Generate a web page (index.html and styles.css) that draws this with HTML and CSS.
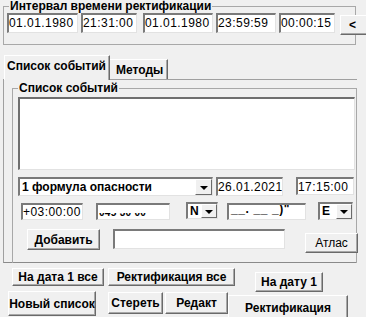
FILE: index.html
```html
<!DOCTYPE html>
<html lang="ru">
<head>
<meta charset="utf-8">
<link rel="stylesheet" href="styles.css">
</head>
<body>
<fieldset class="interval">
  <legend>Интервал времени ректификации</legend>
  <div class="row">
    <div class="tf t-d1">01.01.1980</div>
    <div class="tf t-t1">21:31:00</div>
    <div class="tf t-d2">01.01.1980</div>
    <div class="tf t-t2">23:59:59</div>
    <div class="tf t-step">00:00:15</div>
    <div class="btn b-back">&lt;</div>
  </div>
</fieldset>

<div class="tabs">
  <div class="tab sel">Список событий</div>
  <div class="tab">Методы</div>
</div>

<div class="panel">
  <fieldset class="events">
    <legend>Список событий</legend>
    <div class="listbox"></div>
    <div class="row r1">
      <div class="combo c-formula"><span class="ctext">1 формула опасности</span><span class="arrow"></span></div>
      <div class="tf t-date">26.01.2021</div>
      <div class="tf t-time">17:15:00</div>
    </div>
    <div class="row r2">
      <div class="tf t-tz">+03:00:00</div>
      <div class="tf t-lat"><span class="clip"><span class="cliptext">045 30 00</span></span></div>
      <div class="combo c-ns"><span class="ctext">N</span><span class="arrow"></span></div>
      <div class="tf t-lon"><span class="lontext">__. __ _)"</span></div>
      <div class="combo c-ew"><span class="ctext">E</span><span class="arrow"></span></div>
    </div>
    <div class="row r3">
      <div class="btn b-add">Добавить</div>
      <div class="tf t-name"></div>
      <div class="btn b-atlas">Атлас</div>
    </div>
  </fieldset>
</div>

<div class="brow ba">
  <div class="btn b-date1all">На дата 1 все</div>
  <div class="btn b-rectall">Ректификация все</div>
  <div class="btn b-date1">На дату 1</div>
</div>
<div class="brow bb">
  <div class="btn b-new">Новый список</div>
  <div class="btn b-del">Стереть</div>
  <div class="btn b-edit">Редакт</div>
  <div class="btn b-rect">Ректификация</div>
</div>
</body>
</html>
```

FILE: styles.css
```css
* { box-sizing: border-box; }

body {
  margin: 0;
  width: 366px;
  height: 317px;
  overflow: hidden;
  background: #f0f0f0;
  font-family: "Liberation Sans", Arial, sans-serif;
  font-size: 12px;
  color: #000;
}

fieldset {
  margin: 0;
  padding: 0;
  min-width: 0;
  border: 1px solid #a8a8a8;
}

legend {
  font-weight: bold;
  font-size: 12px;
  line-height: 12px;
  padding: 0 1px;
}

.row {
  display: flex;
  align-items: flex-start;
}

/* text fields */
.tf {
  flex: none;
  height: 20px;
  background: #fff;
  border-style: solid;
  border-width: 2px 1px 1px 2px;
  border-color: #7a7a7a #e2e2e2 #e2e2e2 #7a7a7a;
  font-size: 12px;
  letter-spacing: 0.45px;
  line-height: 17px;
  white-space: nowrap;
  overflow: hidden;
}

/* raised buttons */
.btn {
  flex: none;
  display: flex;
  align-items: center;
  justify-content: center;
  background: #f0f0f0;
  border: 1px solid;
  border-color: #fff #6a6a6a #6a6a6a #fff;
  box-shadow: inset -1px -1px 0 #a8a8a8;
  font-weight: bold;
  font-size: 12px;
  white-space: nowrap;
}

/* interval group */
.interval {
  margin: 0 0 0 3px;
  width: 353px;
  padding: 1px 0 9px 3px;
}
.interval legend { margin-left: 2px; }

.t-d1 { width: 71px; }
.t-t1 { width: 56px; margin-left: 3px; }
.t-d2 { width: 70px; margin-left: 6px; }
.t-t2 { width: 60px; margin-left: 3px; }
.t-step { width: 56px; margin-left: 3px; }
.b-back {
  width: 30px;
  height: 20px;
  margin: 2px 0 0 5px;
  justify-content: flex-start;
  padding-left: 8px;
}

/* tabs */
.tabs {
  display: flex;
  align-items: flex-end;
  height: 24px;
  margin-top: 10px;
  padding-left: 4px;
  position: relative;
  z-index: 1;
}
.tab {
  flex: none;
  height: 20px;
  width: 58px;
  padding: 3px 0 0 6px;
  font-weight: bold;
  line-height: 14px;
  background: #f0f0f0;
  border-top: 1px solid #fff;
  border-right: 1px solid #6a6a6a;
  box-shadow: inset -1px 0 0 #a8a8a8;
  white-space: nowrap;
}
.tab.sel {
  width: 106px;
  height: 25px;
  margin-bottom: -1px;
  padding-left: 2px;
  border-left: 1px solid #fff;
}

/* tab page */
.panel {
  margin-left: 3px;
  width: 354px;
  height: 184px;
  border-top: 1px solid #a0a0a0;
  border-left: 1px solid #a0a0a0;
  border-bottom: 1px solid #8a8a8a;
  padding: 0 0 0 8px;
}
.events {
  margin-top: 2px;
  width: 345px;
  height: 181px;
  padding: 3px 0 0 5px;
  border-bottom: 0;
}

.listbox {
  width: 337px;
  height: 73px;
  background: #fff;
  border-style: solid;
  border-width: 2px 1px 1px 2px;
  border-color: #6f6f6f #e2e2e2 #e2e2e2 #6f6f6f;
}

/* combos */
.combo {
  flex: none;
  display: flex;
  align-items: stretch;
  height: 19px;
  background: #fff;
  border-style: solid;
  border-width: 2px 1px 1px 2px;
  border-color: #7a7a7a #e2e2e2 #e2e2e2 #7a7a7a;
  font-weight: bold;
  line-height: 16px;
  white-space: nowrap;
}
.ctext { flex: 1; padding-left: 2px; overflow: hidden; }
.arrow {
  flex: none;
  width: 17px;
  display: flex;
  align-items: center;
  justify-content: center;
  background: #f0f0f0;
  border: 1px solid;
  border-color: #fff #6a6a6a #6a6a6a #fff;
}
.arrow::after {
  content: "";
  border-style: solid;
  border-width: 4px 4px 0 4px;
  border-color: #000 transparent transparent transparent;
  margin-top: 1px;
}

.r1 { margin-top: 7px; }
.c-formula { width: 195px; }
.t-date { width: 67px; height: 19px; margin-left: 3px; }
.t-time { width: 58px; height: 18px; margin-left: 13px; }

.r2 { margin-top: 6px; }
.t-tz { width: 62px; height: 17px; margin: 1px 0 0 3px; line-height: 15px; }
.t-lat { width: 74px; height: 17px; margin: 1px 0 0 13px; padding-left: 1px; }
.clip {
  display: block;
  height: 5px;
  margin-top: 8px;
  overflow: hidden;
}
.cliptext {
  display: block;
  margin-top: -6px;
  font-size: 10px;
  font-weight: bold;
  line-height: 12px;
  letter-spacing: 0.3px;
}
.c-ns { width: 32px; height: 17px; margin-left: 16px; line-height: 14px; }
.c-ns .arrow, .c-ew .arrow { width: 16px; }
.t-lon { width: 79px; height: 17px; margin: 1px 0 0 9px; padding-left: 2px; }
.lontext { display: block; margin-top: -4px; font-weight: bold; line-height: 17px; letter-spacing: 0.6px; }
.c-ew { width: 35px; height: 18px; margin-left: 12px; line-height: 15px; }

.r3 { margin-top: 9px; }
.b-add { width: 73px; height: 21px; margin-left: 9px; }
.t-name { width: 172px; height: 20px; margin-left: 13px; }
.b-atlas {
  width: 53px;
  height: 20px;
  margin: 4px 0 0 20px;
  font-weight: normal;
}

/* bottom buttons */
.brow {
  display: flex;
  align-items: flex-start;
}
.ba { margin-top: 5px; }
.b-date1all { width: 92px; height: 18px; margin-left: 12px; }
.b-rectall { width: 127px; height: 18px; margin-left: 4px; }
.b-date1 { width: 68px; height: 20px; margin: 4px 0 0 20px; }

.bb { margin-top: -1px; }
.b-new { width: 88px; height: 25px; margin-left: 8px; }
.b-del { width: 55px; height: 22px; margin: 1px 0 0 12px; }
.b-edit { width: 63px; height: 22px; margin: 1px 0 0 2px; }
.b-rect { width: 120px; height: 25px; margin-top: 4px; }
```
